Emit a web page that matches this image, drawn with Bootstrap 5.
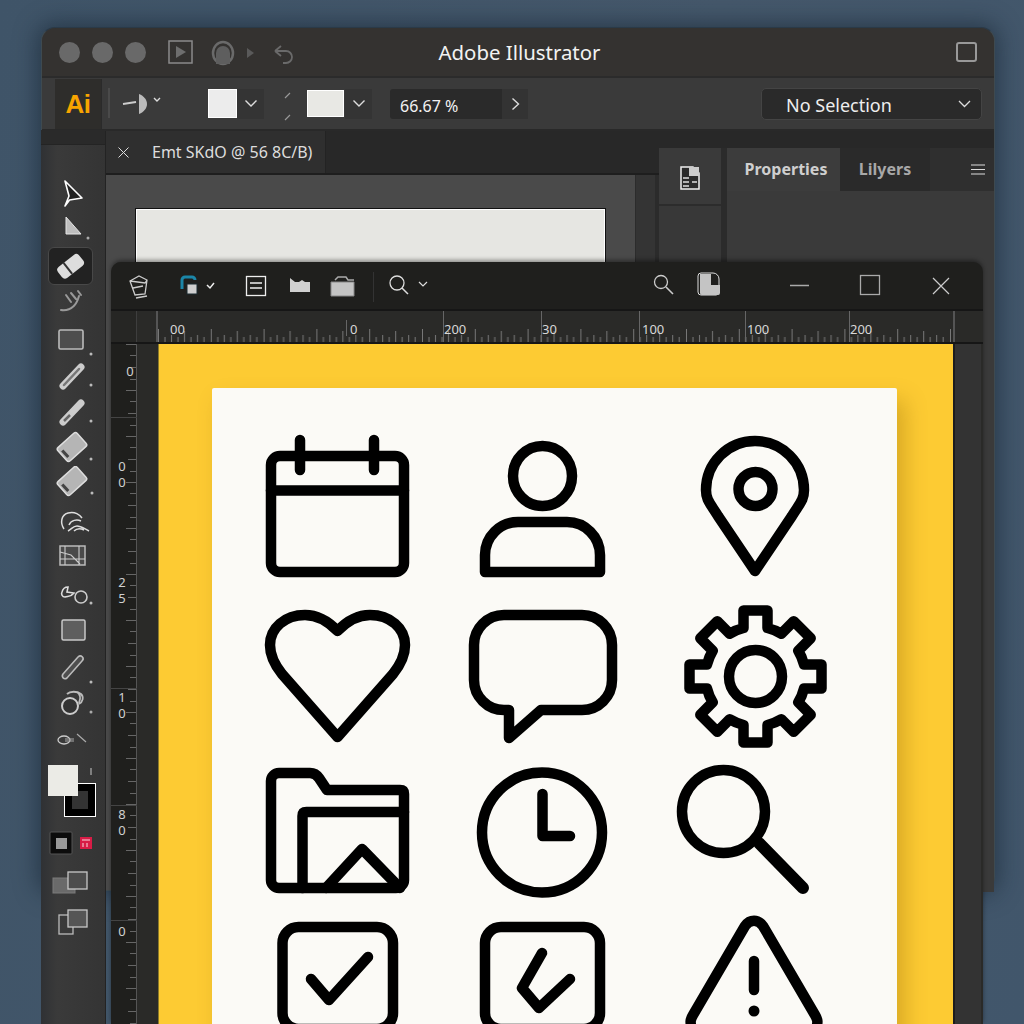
<!DOCTYPE html>
<html lang="en">
<head>
<meta charset="utf-8">
<title>Adobe Illustrator</title>
<link href="https://cdn.jsdelivr.net/npm/bootstrap@5.3.0/dist/css/bootstrap.min.css" rel="stylesheet">
<style>
html,body{height:1024px;overflow:hidden}
body{background:linear-gradient(100deg,#3f5468,#45586b 60%,#41566b);font-family:"Noto Sans","Liberation Sans",sans-serif;position:relative;color:#eee}
svg{display:block;flex:none}
.app-win{position:absolute;left:41px;top:27px;width:954px;height:864px;background:#383838;border-radius:14px;box-shadow:0 0 22px 4px rgba(20,35,50,.55);border:1px solid #3e4a50;border-top-color:#2a3a48}
.title-row{height:50px;display:grid;grid-template-columns:1fr auto 1fr;align-items:center;background:#343230;border-radius:14px 14px 0 0;border-bottom:2px solid #2b2b2b;padding:0 17px}
.title-txt{font-size:20.400px;color:#f2f2f2;line-height:1;margin-left:3px}
.tl-dot{width:21px;height:21px;border-radius:50%;background:#696969;margin-right:12px}
.title-icons{margin-left:-3px}
.win-sq{width:21px;height:20px;border:2px solid #999;border-radius:3px;margin-left:auto;margin-right:0}
.ctl-row{height:53px;background:#3a3a3a;border-bottom:2px solid #292929}
.ai-box{width:46px;height:50px;margin-left:13px;background:#2e2d2b;color:#f7a400;font:700 26px/50px "Liberation Sans",sans-serif;text-align:center;flex:none;letter-spacing:-.5px}
.sw-a{width:29px;height:29px;background:#ececec;margin-left:39px;border:1px solid #fff;flex:none}
.sw-b{width:37px;height:27px;background:#e8e8e4;border:1px solid #fff;margin-left:6px;flex:none}
.ch-box{height:30px;width:27px;background:#343434;display:flex;align-items:center;justify-content:center;margin-left:0;flex:none}
.ctl-slash{margin-left:13px}
.ch-wide{margin-left:1px}
.zoom-box{margin-left:18px;width:112px;height:30px;background:#2a2a2a;border-radius:3px 0 0 3px;font-size:16px;line-height:34px;padding-left:10px;color:#f2f2f2;flex:none}
.zoom-arrow{width:26px;height:30px;background:#333;display:flex;align-items:center;justify-content:center;flex:none}
.sel-box{margin-left:auto;margin-right:12px;width:221px;height:32px;background:#2a2a2a;border:1px solid #444;border-radius:5px;font-size:18px;padding:0 10px 0 24px;color:#eee;display:flex;justify-content:space-between;align-items:center}
.sel-label{position:relative;top:2px}
.body-row{height:761px}
.tool-rail{width:65px;height:894px;background:linear-gradient(90deg,#2f3134,#3a3a3a 25%,#343434);border-right:1px solid #232323;flex:none;margin-left:-1px}
.rail-grip{height:15px;background:#2a2a2a;border-bottom:1px solid #242424;margin-bottom:30px;margin-top:-1px}
.tool-btn{height:36.400px;position:relative}
.tool-active{position:absolute;left:7px;top:-1px;width:45px;height:38px;background:#222;border:1px solid #484848;border-radius:6px}
.tool-btn svg{position:relative}
.swatch-stack{padding-top:5px}
.swatch-row{margin-top:7px}
.mode-a{margin-top:13px}
.mode-b{margin-top:6px}
.doc-col{width:553px;flex:none}
.tab-row{height:44px;background:#282828;border-bottom:2px solid #1e1e1e}
.doc-tab{width:220px;height:42px;background:#2f2f2f;border-right:1px solid #232323;font-size:16px;color:#ddd;display:flex;align-items:center;padding-left:12px;gap:23px;white-space:nowrap}
.doc-canvas{height:715px;display:flex;background:#4a4a4a}
.doc-area{width:529px;padding:34px 30px 0;flex:none}
.art-top{height:54px;background:#e6e6e2;border:1px solid #fff;outline:1px solid #111}
.doc-scroll{width:20px;background:#343434;border-left:1px solid #2c2c2c;flex:none}
.doc-gap{width:4px;background:#2b2b2b;flex:none}
.side-col{flex:1;background:#383838}
.side-strip{height:17px;background:#282828}
.side-panels{display:flex;height:744px}
.tile-col{width:63px;border-right:1px solid #2b2b2b;flex:none;background:#383838}
.tile-a{height:58px;border-bottom:2px solid #2c2c2c;display:flex;align-items:center;justify-content:center;background:#3a3a3a;padding-top:3px}
.dock-gap{width:5px;background:#2b2b2b;flex:none}
.props{flex:1;background:#3a3a3a}
.prop-tabs{height:43px;display:flex;align-items:center;background:#2f2f2f}
.prop-t{height:43px;font-weight:700;font-size:16px;line-height:42px;text-align:center;flex:none}
.prop-on{width:113px;background:#3c3c3c;color:#cfcfcf;padding-left:5px}
.prop-off{width:90px;background:#2a2a2a;color:#a8a8a8}
.burger{margin-left:auto;margin-right:9px}
.inner-win{position:absolute;left:111px;top:262px;width:872px;height:762px;background:#2a2a28;border-radius:10px 10px 0 0;overflow:hidden;box-shadow:0 -2px 4px rgba(0,0,0,.4)}
.inner-top{height:49px;background:#1f1f1d;border-bottom:2px solid #161616}
.ruler-h{height:33px;background:#2a2a28;border-bottom:2px solid #161616}
.r-corner{width:47px;border-right:2px solid #555;height:100%;flex:none;display:flex}
.r-corner-in{width:26px;border-right:1px solid #3e3e3e;background:#262624}
.r-corner-b{width:28px;flex:none;height:100%;border-left:2px solid #555}
.inner-main{height:680px}
.ruler-v{width:47px;flex:none;height:100%}
.art-canvas{width:795px;flex:none;background:#fdcb33;padding:44px 56px 0 53px;height:100%;border-left:1px solid #8a7a2a;overflow:hidden}
.paper-sheet{background:#fbfaf6;padding-top:36px;height:660px;box-shadow:8px 12px 22px rgba(130,90,0,.3);border-radius:2px;display:grid;grid-template-columns:228px 210px 247px;grid-template-rows:168px 165px 148px 135px}
.ink{fill:none;stroke:#000;stroke-width:10.500;stroke-linejoin:round;stroke-linecap:round}
.v-strip{width:28px;flex:none;background:#333;border-left:2px solid #1d1d1d}
</style>
</head>
<body>
<div class="app-win">
  <div class="title-row">
    <div class="d-flex align-items-center">
      <span class="tl-dot"></span><span class="tl-dot"></span><span class="tl-dot"></span>
      <svg class="title-icons" width="142" height="30" viewBox="0 0 142 30"><rect x="14" y="4" width="23" height="22" fill="none" stroke="#8a8a8a" stroke-width="1.500"/><path d="M21 9l10 6-10 6z" fill="#6e6e6e"/><ellipse cx="68" cy="16" rx="10" ry="11" fill="none" stroke="#6a6a6a" stroke-width="2.500"/><path d="M61 27v-11a7 7 0 0 1 14 0v11z" fill="#5e5e5e"/><path d="M92 11l7 5-7 5z" fill="#5a5a5a"/><path d="M120 14h11a6 6 0 0 1 0 12h-3M120 14l6-5M120 14l6 5" fill="none" stroke="#6a6a6a" stroke-width="1.800"/></svg>
    </div>
    <div class="title-txt">Adobe Illustrator</div>
    <div class="d-flex"><span class="win-sq"></span></div>
  </div>
  <div class="ctl-row d-flex align-items-center">
    <div class="ai-box">Ai</div>
    <svg width="68" height="50" viewBox="0 0 68 50"><path d="M.5 0v50" stroke="#2a2a2a"/><path d="M8 9v30" stroke="#5a5a5a"/><path d="M22 25l13-2" stroke="#ccc" stroke-width="2"/><path d="M38 15c5 2 8 6 8 10s-3 8-8 10z" fill="#bbb"/><path d="M53 19l3 3 3-3" fill="none" stroke="#ddd" stroke-width="1.400"/></svg>
    <span class="sw-a"></span>
    <span class="ch-box"><svg width="14" height="9" viewBox="0 0 14 9"><path d="M1.500 1.500l5.500 5.500 5.500-5.500" fill="none" stroke="#ddd" stroke-width="1.400"/></svg></span>
    <svg class="ctl-slash" width="24" height="40" viewBox="0 0 24 40"><path d="M13 9l-5 5M13 31l-5 5" stroke="#999" stroke-width="1.200"/></svg>
    <span class="sw-b"></span>
    <span class="ch-box ch-wide"><svg width="14" height="9" viewBox="0 0 14 9"><path d="M1.500 1.500l5.500 5.500 5.500-5.500" fill="none" stroke="#ddd" stroke-width="1.400"/></svg></span>
    <div class="zoom-box">66.67 %</div>
    <div class="zoom-arrow"><svg width="9" height="14" viewBox="0 0 9 14"><path d="M1.500 1.500l6 5.500-6 5.500" fill="none" stroke="#ddd" stroke-width="1.400"/></svg></div>
    <div class="sel-box"><span class="sel-label">No Selection</span><svg width="13" height="8" viewBox="0 0 13 8"><path d="M1 1l5.500 5.500 5.500-5.500" fill="none" stroke="#ddd" stroke-width="1.300"/></svg></div>
  </div>
  <div class="body-row d-flex">
    <div class="tool-rail">
      <div class="rail-grip"></div>
      <div class="tool-btn"><svg width="65" height="36" viewBox="0 0 65 36"><path d="M24 6l17 17-12.500 2L24 31l4-10z" fill="#222" stroke="#fff" stroke-width="1.600" stroke-linejoin="round"/></svg></div>
      <div class="tool-btn"><svg width="65" height="36" viewBox="0 0 65 36"><path d="M25 6v17h15z" fill="#bdbdbd" stroke="#e5e5e5"/><circle cx="47" cy="27" r="1.500" fill="#aaa"/></svg></div>
      <div class="tool-btn"><span class="tool-active"></span><svg width="65" height="36" viewBox="0 0 65 36"><g transform="rotate(-38 30 18)"><rect x="16" y="11" width="27" height="14" rx="4" fill="#ddd"/><rect x="25" y="11" width="2" height="14" fill="#333"/></g></svg></div>
      <div class="tool-btn"><svg width="65" height="36" viewBox="0 0 65 36"><path d="M20 26c8 1 15-3 18-14M25 11l5 7M30 9l5 6M37 7l3 4" fill="none" stroke="#999" stroke-width="2" stroke-linecap="round"/></svg></div>
      <div class="tool-btn"><svg width="65" height="36" viewBox="0 0 65 36"><rect x="18" y="9" width="24" height="19" rx="1.500" fill="#4e4e4e" stroke="#bbb" stroke-width="1.600"/><circle cx="50" cy="33" r="1.500" fill="#bbb"/></svg></div>
      <div class="tool-btn"><svg width="65" height="36" viewBox="0 0 65 36"><path d="M22 29l18-19" stroke="#ccc" stroke-width="7" stroke-linecap="round"/><path d="M23 28l15-16" stroke="#777" stroke-width="2.500" stroke-linecap="round"/><circle cx="50" cy="28" r="1.500" fill="#bbb"/></svg></div>
      <div class="tool-btn"><svg width="65" height="36" viewBox="0 0 65 36"><path d="M22 29l18-19" stroke="#ccc" stroke-width="7" stroke-linecap="round"/><path d="M23 28l6-6" stroke="#666" stroke-width="2.500"/><circle cx="50" cy="28" r="1.500" fill="#bbb"/></svg></div>
      <div class="tool-btn"><svg width="65" height="36" viewBox="0 0 65 36"><g transform="rotate(-42 31 17)"><rect x="18" y="8" width="26" height="18" rx="2.500" fill="#b5b5b5" stroke="#ddd" stroke-width="1.500"/><rect x="20" y="13" width="3" height="9" fill="#444"/></g><circle cx="50" cy="29" r="1.500" fill="#bbb"/></svg></div>
      <div class="tool-btn"><svg width="65" height="36" viewBox="0 0 65 36"><g transform="rotate(-42 31 15)"><rect x="18" y="6" width="26" height="18" rx="2.500" fill="#b5b5b5" stroke="#ddd" stroke-width="1.500"/><rect x="20" y="11" width="3" height="9" fill="#444"/></g><circle cx="51" cy="27" r="1.500" fill="#bbb"/></svg></div>
      <div class="tool-btn"><svg width="65" height="36" viewBox="0 0 65 36"><path d="M23 26c-4-6-3-14 4-16 7-2 12 2 14 5M28 22c2-5 8-6 12-4M27 28c4-2 5-5 9-5s6 2 12 5M33 28c3-3 6-3 10-1" fill="none" stroke="#ddd" stroke-width="1.500"/></svg></div>
      <div class="tool-btn"><svg width="65" height="36" viewBox="0 0 65 36"><rect x="19" y="7" width="25" height="19" fill="#4a4a4a" stroke="#bbb" stroke-width="1.500"/><path d="M24 7v19M38 7v19M19 13l11 3 9 9M19 20h25" fill="none" stroke="#ccc" stroke-width="1.100"/></svg></div>
      <div class="tool-btn"><svg width="65" height="36" viewBox="0 0 65 36"><circle cx="40" cy="22" r="6" fill="none" stroke="#ccc" stroke-width="1.600"/><path d="M21 17c1-4 4-5 6-5l-1 5 7 1c-3 4-6 3-9 4-3 0-4-3-3-5z" fill="none" stroke="#ddd" stroke-width="1.600"/><circle cx="50" cy="28" r="1.500" fill="#bbb"/></svg></div>
      <div class="tool-btn"><svg width="65" height="36" viewBox="0 0 65 36"><rect x="21" y="8" width="23" height="20" rx="1.500" fill="#5e5e5e" stroke="#c8c8c8" stroke-width="1.500"/></svg></div>
      <div class="tool-btn"><svg width="65" height="36" viewBox="0 0 65 36"><path d="M22 26l15-17c3-3 7 1 4 4L26 30c-3 2-6-1-4-4z" fill="#4e4e4e" stroke="#bbb" stroke-width="1.600"/><circle cx="50" cy="34" r="1.500" fill="#bbb"/></svg></div>
      <div class="tool-btn"><svg width="65" height="36" viewBox="0 0 65 36"><circle cx="29" cy="22" r="8" fill="#333" stroke="#ccc" stroke-width="2"/><path d="M26 10c3-3 10-3 14 0 3 3 2 8-2 10M36 8c3 2 4 6 2 11" fill="none" stroke="#bbb" stroke-width="1.800"/><circle cx="50" cy="28" r="1.500" fill="#aaa"/></svg></div>
      <div class="tool-btn"><svg width="65" height="36" viewBox="0 0 65 36"><ellipse cx="23" cy="19" rx="6" ry="4" fill="none" stroke="#ccc" stroke-width="1.300"/><path d="M24 18h9M24 20h9M36 13l9 8" stroke="#aaa" stroke-width="1.200"/></svg></div>
      <div class="swatch-stack">
        <svg width="65" height="62" viewBox="0 0 65 62"><rect x="23.500" y="21.500" width="31" height="33" fill="#000" stroke="#fff"/><rect x="31" y="29" width="16" height="18" fill="#333"/><rect x="7" y="3" width="30" height="31" fill="#ebebe6"/><path d="M50 6v7" stroke="#999" stroke-width="1.500"/></svg>
        <svg class="swatch-row" width="65" height="26" viewBox="0 0 65 26"><rect x="9" y="1" width="22" height="22" rx="1" fill="#0c0c0c" stroke="#555"/><rect x="15" y="7" width="11" height="11" fill="#999"/><rect x="39" y="6" width="12" height="12" fill="#d81c46"/><path d="M41 9h8M42 12v4M46 12v4" stroke="#f7d9df" stroke-width="1"/></svg>
        <svg class="mode-a" width="65" height="32" viewBox="0 0 65 32"><rect x="12" y="8" width="22" height="15" fill="#6a6a6a" stroke="#7b7b7b"/><rect x="27" y="2" width="19" height="17" fill="#4c4c4c" stroke="#c8c8c8" stroke-width="1.300"/></svg>
        <svg class="mode-b" width="65" height="32" viewBox="0 0 65 32"><rect x="18" y="7" width="14" height="19" fill="none" stroke="#bbb" stroke-width="1.300"/><rect x="27" y="2" width="19" height="17" fill="#555" stroke="#c8c8c8" stroke-width="1.300"/></svg>
      </div>
    </div>
    <div class="doc-col">
      <div class="tab-row"><div class="doc-tab"><svg width="11" height="11" viewBox="0 0 11 11"><path d="M.5.500l10 10M10.500.500l-10 10" stroke="#ddd"/></svg><span>Emt SKdO @ 56 8C/B)</span></div></div>
      <div class="doc-canvas">
        <div class="doc-area"><div class="art-top"></div></div>
        <div class="doc-scroll"></div>
        <div class="doc-gap"></div>
      </div>
    </div>
    <div class="side-col">
      <div class="side-strip"></div>
      <div class="side-panels">
        <div class="tile-col"><div class="tile-a"><svg width="20" height="24" viewBox="0 0 20 24"><path d="M1 1h12l6 6v16H1z" fill="#2a2a2a" stroke="#eee" stroke-width="1.500"/><path d="M9 1h10v9H9z" fill="#ccc"/><path d="M3 12h6M3 16h6M3 20h6M12 16h5" stroke="#ddd" stroke-width="1.300"/></svg></div></div>
        <div class="dock-gap"></div>
        <div class="props">
          <div class="prop-tabs"><span class="prop-t prop-on">Properties</span><span class="prop-t prop-off">Lilyers</span>
            <svg class="burger" width="14" height="11" viewBox="0 0 14 11"><path d="M0 1h14M0 5.500h14M0 10h14" stroke="#ddd" stroke-width="1.200"/></svg></div>
        </div>
      </div>
    </div>
  </div>
</div>

<div class="inner-win">
  <div class="inner-top d-flex justify-content-between">
    <svg width="330" height="47" viewBox="111 262 330 47"><g fill="none" stroke="#ccc" stroke-width="1.300"><path d="M130 281l9-5 8 4-2 14-10 1zM130 281l15 2 2-3M133 288l10-2M136 298l11-2"/></g><path d="M182 289v-9a3 3 0 0 1 3-3h7a3 3 0 0 1 3 3" fill="none" stroke="#1b86a8" stroke-width="3"/><rect x="187" y="284" width="10" height="10" fill="#cfcfcf" stroke="#1b2a30"/><path d="M207 285l3 3 4-5" fill="none" stroke="#eee" stroke-width="1.500"/><rect x="246.500" y="276.500" width="19" height="19" fill="none" stroke="#eee" stroke-width="1.300"/><path d="M250 283h12M250 288h12" stroke="#eee" stroke-width="1.600"/><path d="M290 278l5 4h4l3-2 3 2h5v10h-20z" fill="#d0d0d0"/><path d="M331 282h23v14h-23z" fill="#c4c4c4" stroke="#888"/><path d="M335 280l3-3h8l2 3h6" fill="none" stroke="#aaa" stroke-width="1.500"/><path d="M373.500 272v30" stroke="#333"/><circle cx="397" cy="283" r="7" fill="none" stroke="#ddd" stroke-width="1.300"/><path d="M402 288l6 6" stroke="#ddd" stroke-width="1.500"/><path d="M419 282l4 4 4-4" fill="none" stroke="#ddd" stroke-width="1.200"/></svg>
    <svg width="343" height="47" viewBox="640 262 343 47"><circle cx="661" cy="282" r="6.500" fill="none" stroke="#ccc" stroke-width="1.300"/><path d="M666 287l7 7" stroke="#ccc" stroke-width="1.600"/><path d="M698 276a3 3 0 0 1 3-3h12a6 6 0 0 1 6 6v13a3 3 0 0 1-3 3h-15a3 3 0 0 1-3-3z" fill="none" stroke="#ddd" stroke-width="1"/><path d="M700 274h11v11h9v8a2 2 0 0 1-2 2h-16a2 2 0 0 1-2-2z" fill="#c4c4c4"/><path d="M790 285.500h19" stroke="#aaa" stroke-width="1.600"/><rect x="860.500" y="275.500" width="19" height="19" fill="none" stroke="#aaa" stroke-width="1.300"/><path d="M933 278l16 16M949 278l-16 16" stroke="#ccc" stroke-width="1.200"/></svg>
  </div>
  <div class="ruler-h d-flex">
    <div class="r-corner"><div class="r-corner-in"></div></div>
    <svg width="795" height="31" viewBox="158 311 795 31">
      <defs><pattern id="hticks" x="158" y="311" width="52.800" height="31" patternUnits="userSpaceOnUse"><path d="M0.500 18v13M26.500 20v11M7 26v5M13.500 24v7M20 26v5M33 26v5M39.500 24v7M46 26v5" stroke="#777" stroke-width="1"/></pattern></defs>
      <rect x="158" y="311" width="795" height="31" fill="url(#hticks)"/>
      <path d="M443.500 311v31M541.500 311v31M639.500 311v31M745.500 311v31M849.500 311v31M346.500 320v16" stroke="#666"/>
      <g fill="#d8d8d8" font-size="13">
        <text x="170" y="334">00</text><text x="350" y="334">0</text><text x="444" y="334">200</text><text x="542" y="334">30</text><text x="642" y="334">100</text><text x="747" y="334">100</text><text x="850" y="334">200</text>
      </g>
    </svg>
    <div class="r-corner-b"></div>
  </div>
  <div class="inner-main d-flex">
    <div class="ruler-v">
      <svg width="47" height="680" viewBox="111 344 47 680">
        <defs><pattern id="vticks" x="111" y="344" width="47" height="46" patternUnits="userSpaceOnUse"><path d="M126 .5h10M130 11.500h6M128 23.500h8M130 35.500h6" transform="translate(-111 0)" stroke="#666"/></pattern></defs>
        <rect x="111" y="344" width="25" height="680" fill="#1f1f1d"/>
        <rect x="111" y="344" width="26" height="680" fill="url(#vticks)"/>
        <path d="M136.500 344v680" stroke="#555"/>
        <path d="M111 417.500h26M111 688.500h26M111 805.500h26M111 920.500h26" stroke="#444"/>
        <g fill="#d0d0d0" font-size="13" text-anchor="middle">
          <text x="130" y="376">0</text>
          <text><tspan x="122" y="471">0</tspan><tspan x="122" y="487">0</tspan></text>
          <text><tspan x="122" y="587">2</tspan><tspan x="122" y="603">5</tspan></text>
          <text><tspan x="122" y="702">1</tspan><tspan x="122" y="718">0</tspan></text>
          <text><tspan x="122" y="819">8</tspan><tspan x="122" y="835">0</tspan></text>
          <text x="122" y="936">0</text>
        </g>
      </svg>
    </div>
    <div class="art-canvas">
      <div class="paper-sheet">
        <svg class="ink" width="228" height="168" viewBox="212 424 228 168"><rect x="271" y="456" width="133" height="116" rx="9"/><path d="M271 490.500h133M300 440v30M374 440v30"/></svg>
        <svg class="ink" width="210" height="168" viewBox="440 424 210 168"><ellipse cx="542.500" cy="476" rx="29.500" ry="30"/><path d="M485 572v-17a33 33 0 0 1 33-33h49a33 33 0 0 1 33 33v17z"/></svg>
        <svg class="ink" width="247" height="168" viewBox="650 424 247 168"><path d="M755 571l-37-55c-8-13-12-16-12-26a49 49 0 0 1 98 0c0 10-4 13-12 26z"/><circle cx="755.500" cy="489" r="17"/></svg>
        <svg class="ink" width="228" height="165" viewBox="212 592 228 165"><path d="M337.500 737L282 674c-8-10-12-19-12-29 0-17 15-30 35-30 13 0 23 6 32.500 16 9.500-10 19.500-16 32.500-16 20 0 35 13 35 30 0 10-4 19-12 29z"/></svg>
        <svg class="ink" width="210" height="165" viewBox="440 592 210 165"><path d="M506 615h76a30 30 0 0 1 30 30v35a30 30 0 0 1-30 30h-41l-32 28v-28h-5a30 30 0 0 1-30-30v-35a30 30 0 0 1 30-30z"/></svg>
        <svg class="ink" width="247" height="165" viewBox="650 592 247 165"><g transform="translate(755.500 676.500)"><path d="M-12-48.500V-66H12V-48.500A50 50 0 0 1 25.800-42.800L38.200-55.200 55.200-38.200 42.800-25.800A50 50 0 0 1 48.500-12H66V12H48.500A50 50 0 0 1 42.800 25.800L55.200 38.200 38.200 55.200 25.800 42.800A50 50 0 0 1 12 48.500V66H-12V48.500A50 50 0 0 1-25.800 42.800L-38.200 55.200-55.200 38.200-42.800 25.800A50 50 0 0 1-48.500 12H-66V-12H-48.500A50 50 0 0 1-42.800-25.800L-55.200-38.200-38.200-55.200-25.800-42.800A50 50 0 0 1-12-48.500z"/><circle r="26.500"/></g></svg>
        <svg class="ink" width="228" height="148" viewBox="212 757 228 148"><path d="M271 781a8 8 0 0 1 8-8h31c5 0 7 2 9 5l8 12h73c3 0 4 1 4 4v86a8 8 0 0 1-8 8H279a8 8 0 0 1-8-8z"/><path d="M302.500 888v-72c0-3 1-4 4-4H404M326 888l36-39 38 39"/></svg>
        <svg class="ink" width="210" height="148" viewBox="440 757 210 148"><circle cx="542" cy="832.500" r="60"/><path d="M542.500 794v42H570"/></svg>
        <svg class="ink" width="247" height="148" viewBox="650 757 247 148"><circle cx="723.500" cy="811.500" r="41.500"/><path d="M759 843l44 45" stroke-width="12"/></svg>
        <svg class="ink" width="228" height="135" viewBox="212 905 228 135"><rect x="282.500" y="927" width="110.500" height="102" rx="16"/><path d="M311 979l18 21 39-43"/></svg>
        <svg class="ink" width="210" height="135" viewBox="440 905 210 135"><rect x="485" y="927" width="115" height="102" rx="16"/><path d="M542 953l-20 35 17 20 31-29"/></svg>
        <svg class="ink" width="247" height="135" viewBox="650 905 247 135"><path d="M692 1030c-2-8-2-10 1-15l52-89c5-7 13-7 18 0l52 89c3 5 3 7 1 15z"/><path d="M754 961v29"/><circle cx="754" cy="1011" r="5.500" fill="#000" stroke="none"/></svg>
      </div>
    </div>
    <div class="v-strip"></div>
  </div>
</div>
<script src="https://cdn.jsdelivr.net/npm/bootstrap@5.3.0/dist/js/bootstrap.bundle.min.js"></script>
</body>
</html>
